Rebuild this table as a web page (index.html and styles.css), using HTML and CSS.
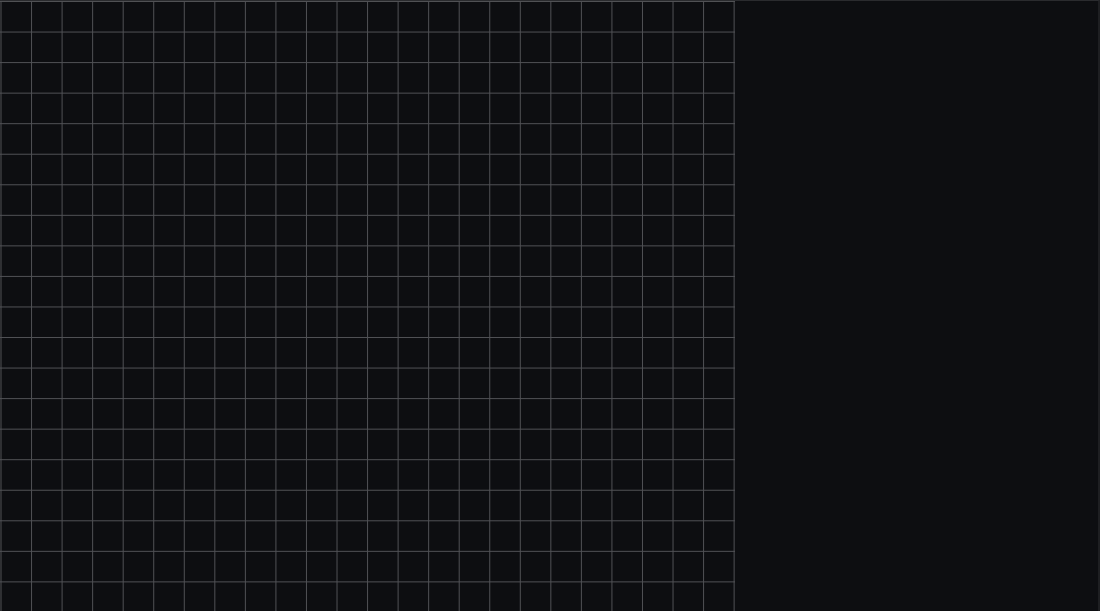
FILE: index.html
```html
<!DOCTYPE html>
<html>
<head>
<meta charset="utf-8">
<link rel="stylesheet" href="styles.css">
</head>
<body>
<div class="app">
  <div class="canvas"></div>
  <div class="panel"></div>
</div>
</body>
</html>
```
FILE: styles.css
```css
html, body {
  margin: 0;
  padding: 0;
  background: #0d0e11;
  font-family: "Liberation Sans", sans-serif;
}
.app {
  display: flex;
  width: 1100px;
  height: 611px;
  box-sizing: border-box;
  border-top: 1px solid #2a2b2e;
  border-right: 2px solid #1e1f22;
  overflow: hidden;
}
.canvas {
  width: 735px;
  height: 100%;
  flex: none;
  background-color: #0d0e11;
  background-image:
    linear-gradient(to right, #505155 1px, transparent 1px),
    linear-gradient(to bottom, #505155 1px, transparent 1px);
  background-size: 30.56px 30.56px;
  background-position: 0.5px 0px;
}
.panel {
  flex: 1;
  background: #0d0e11;
}
```
